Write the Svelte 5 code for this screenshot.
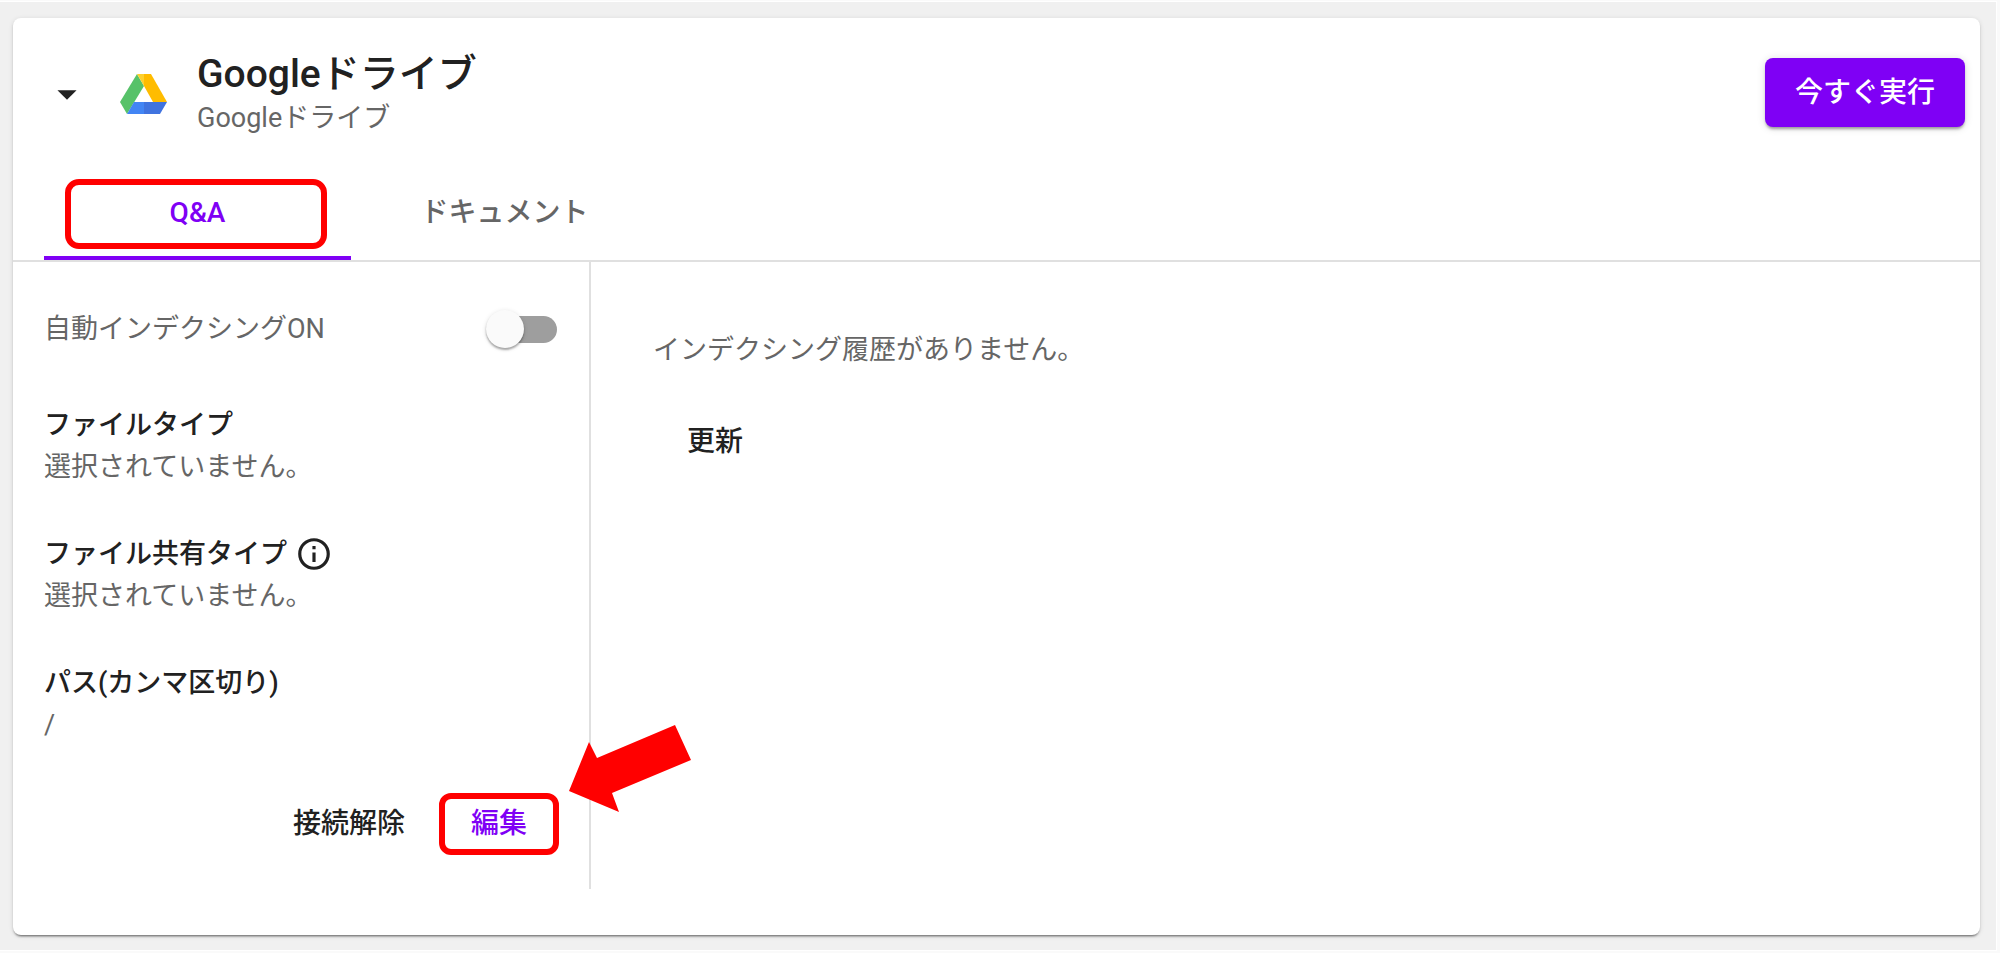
<script lang="ts">
	interface Setting {
		label: string;
		value: string;
		info?: boolean;
	}

	const tabs: string[] = ['Q&A', 'ドキュメント'];

	const settings: Setting[] = [
		{ label: 'ファイルタイプ', value: '選択されていません。' },
		{ label: 'ファイル共有タイプ', value: '選択されていません。', info: true },
		{ label: 'パス(カンマ区切り)', value: '/' }
	];

	let activeTab = $state(0);
	let autoIndexing = $state(false);
	let expanded = $state(true);
</script>

<main class="page">
	<section class="card">
		<header class="header">
			<button
				class="caret"
				type="button"
				aria-label="開閉"
				aria-expanded={expanded}
				onclick={() => (expanded = !expanded)}
			>
				<svg viewBox="0 0 24 24" fill="currentColor"><path d="M7 10l5 5 5-5z" /></svg>
			</button>

			<!-- Google Drive -->
			<svg class="logo" viewBox="0 0 47 40" aria-hidden="true">
				<path fill="#57c269" d="M17 0L0 28l7 12L24 12z" />
				<path fill="#fdd02f" d="M17 0h7v12z" />
				<path fill="#ffbc00" d="M24 0h7l16 28H33L24 12z" />
				<path fill="#4285f4" d="M14 28h10v12H7z" />
				<path fill="#4073df" d="M24 28h23l-7 12H24z" />
			</svg>

			<div class="heading">
				<h1>Googleドライブ</h1>
				<p>Googleドライブ</p>
			</div>

			<button class="run" type="button">今すぐ実行</button>
		</header>

		<div class="tabs" role="tablist">
			{#each tabs as tab, i}
				<button
					class="tab"
					class:active={activeTab === i}
					type="button"
					role="tab"
					aria-selected={activeTab === i}
					onclick={() => (activeTab = i)}
				>
					{tab}
					{#if i === 0}
						<span class="marker"></span>
					{/if}
				</button>
			{/each}
		</div>

		{#if expanded}
			<div class="body">
				<div class="settings">
					<div class="switch-row">
						<label for="auto-indexing">自動インデクシングON</label>
						<input
							id="auto-indexing"
							class="switch"
							type="checkbox"
							role="switch"
							bind:checked={autoIndexing}
						/>
					</div>

					<dl>
						{#each settings as setting}
							<div class="setting">
								<dt>
									{setting.label}
									{#if setting.info}
										<svg class="info" viewBox="0 0 24 24" fill="currentColor" aria-hidden="true">
											<path
												d="M11 9h2V7h-2m1 13c-4.41 0-8-3.59-8-8s3.59-8 8-8 8 3.59 8 8-3.59 8-8 8m0-18A10 10 0 0 0 2 12a10 10 0 0 0 10 10 10 10 0 0 0 10-10A10 10 0 0 0 12 2m-1 15h2v-6h-2v6z"
											/>
										</svg>
									{/if}
								</dt>
								<dd>{setting.value}</dd>
							</div>
						{/each}
					</dl>

					<div class="actions">
						<button class="text-button" type="button">接続解除</button>
						<button class="text-button edit" type="button">
							編集
							<svg class="arrow" viewBox="0 0 122 87" aria-hidden="true">
								<path fill="#f00" d="M0 66L20 17l8 16L106 0l16 35-79 33 7 19z" />
							</svg>
						</button>
					</div>
				</div>

				<div class="history">
					<p>インデクシング履歴がありません。</p>
					<button class="text-button" type="button">更新</button>
				</div>
			</div>
		{/if}
	</section>
</main>

<style>
	:global(body) {
		background: #fafafa;
	}

	.page {
		margin: 1px 3px 0 0;
		padding: 16px 16px 15px 13px;
		border: 1px solid #fff;
		border-left: none;
		background: #f0f0f0;
		color: #212121;
		font-family: Roboto, 'Noto Sans CJK JP', sans-serif;
		font-size: 27px;
		line-height: 42px;
	}

	h1,
	p,
	dl,
	dd {
		margin: 0;
	}

	button {
		padding: 0;
		border: none;
		background: none;
		color: inherit;
		font: inherit;
		font-size: 28px;
		font-weight: 500;
		cursor: pointer;
	}

	.card {
		padding-bottom: 46px;
		border-radius: 8px;
		background: #fff;
		box-shadow:
			0 3px 2px -2px rgba(0, 0, 0, 0.4),
			0 2px 2px rgba(0, 0, 0, 0.14),
			0 1px 5px rgba(0, 0, 0, 0.12);
	}

	.header {
		display: flex;
		box-sizing: border-box;
		align-items: center;
		height: 148px;
		padding: 40px 15px 36px 31px;
	}

	.caret {
		display: flex;
		width: 46px;
		height: 46px;
	}

	.caret svg {
		width: 100%;
	}

	.logo {
		width: 47px;
		height: 40px;
		margin: 0 30px;
	}

	.heading {
		flex: 1;
	}

	.heading h1 {
		font-size: 39px;
		font-weight: 500;
		line-height: 48px;
	}

	.heading p {
		color: #666;
		line-height: 40px;
	}

	.run {
		align-self: flex-start;
		height: 69px;
		padding: 0 30px;
		border-radius: 8px;
		background: #7f00f5;
		color: #fff;
		box-shadow:
			0 3px 3px -1px rgba(0, 0, 0, 0.35),
			0 1px 8px rgba(0, 0, 0, 0.14);
	}

	.tabs {
		display: flex;
		padding-left: 31px;
		border-bottom: 2px solid #e0e0e0;
	}

	.tab {
		position: relative;
		width: 307px;
		height: 94px;
		border-top: 4px solid transparent;
		border-bottom: 4px solid transparent;
		color: #666;
	}

	.tab.active {
		border-bottom-color: #7f00f5;
		color: #7f00f5;
	}

	.marker {
		position: absolute;
		inset: 9px 24px 7px 21px;
		border: 6px solid #f00;
		border-radius: 14px;
	}

	.body {
		display: flex;
	}

	.settings {
		box-sizing: border-box;
		width: 578px;
		padding: 46px 30px 34px 31px;
		border-right: 2px solid #e0e0e0;
	}

	.switch-row {
		display: flex;
		align-items: center;
		justify-content: space-between;
		color: #666;
	}

	.switch {
		position: relative;
		width: 62px;
		height: 27px;
		margin: 0 2px 0 0;
		border-radius: 14px;
		background: #9e9e9e;
		appearance: none;
		cursor: pointer;
	}

	.switch::before {
		content: '';
		position: absolute;
		top: -6px;
		left: -9px;
		width: 38px;
		height: 38px;
		border-radius: 50%;
		background: #fafafa;
		box-shadow:
			0 2px 2px rgba(0, 0, 0, 0.3),
			0 1px 5px rgba(0, 0, 0, 0.12);
	}

	.switch:checked {
		background: #bf80fa;
	}

	.switch:checked::before {
		left: 32px;
		background: #7f00f5;
	}

	.setting {
		margin-top: 45px;
	}

	.setting:first-child {
		margin-top: 54px;
	}

	dt {
		display: flex;
		align-items: center;
		gap: 8px;
		font-weight: 500;
	}

	dd {
		color: #666;
	}

	.info {
		width: 38px;
		height: 38px;
	}

	.actions {
		display: flex;
		justify-content: flex-end;
		margin-top: 47px;
	}

	.text-button {
		height: 62px;
		padding: 0 34px;
	}

	.edit {
		position: relative;
		padding: 0 26px;
		border: 6px solid #f00;
		border-radius: 12px;
		color: #7f00f5;
	}

	.arrow {
		position: absolute;
		left: 124px;
		bottom: 37px;
		width: 122px;
		height: 87px;
	}

	.history {
		flex: 1;
		padding: 67px 62px;
	}

	.history p {
		margin-bottom: 40px;
		color: #666;
	}
</style>
